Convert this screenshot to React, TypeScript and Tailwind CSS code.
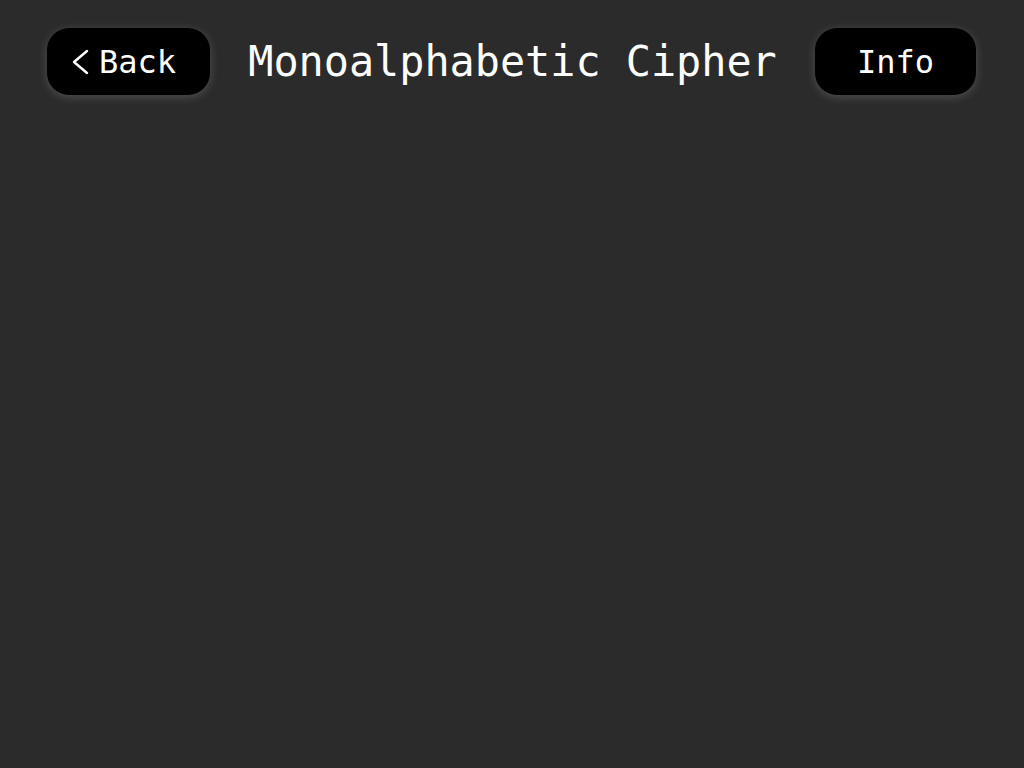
export default function App() {
  return (
    <div className="w-full h-[768px] bg-[#2b2b2b] text-white overflow-hidden font-['DejaVu_Sans_Mono','Liberation_Mono',monospace]">
      {/* ヘッダ */}
      <header className="flex items-center justify-between pl-[47px] pr-[48px] pt-[28px]">
        <button
          type="button"
          className="w-[163px] h-[67px] rounded-[22px] bg-black flex items-center pl-[24px] gap-[10px] shadow-[0_2px_10px_rgba(255,255,255,0.18)]"
        >
          <svg width="18" height="28" viewBox="0 0 18 28" fill="none">
            <path
              d="M16 3 L3 14 L16 25"
              stroke="white"
              strokeWidth="2.4"
              strokeLinecap="round"
              strokeLinejoin="round"
            />
          </svg>
          <span className="text-[32px] leading-none">Back</span>
        </button>

        <h1 className="text-[41.8px] leading-none">Monoalphabetic Cipher</h1>

        <button
          type="button"
          className="w-[161px] h-[67px] rounded-[22px] bg-black flex items-center justify-center shadow-[0_2px_10px_rgba(255,255,255,0.18)]"
        >
          <span className="text-[32px] leading-none">Info</span>
        </button>
      </header>
    </div>
  );
}
